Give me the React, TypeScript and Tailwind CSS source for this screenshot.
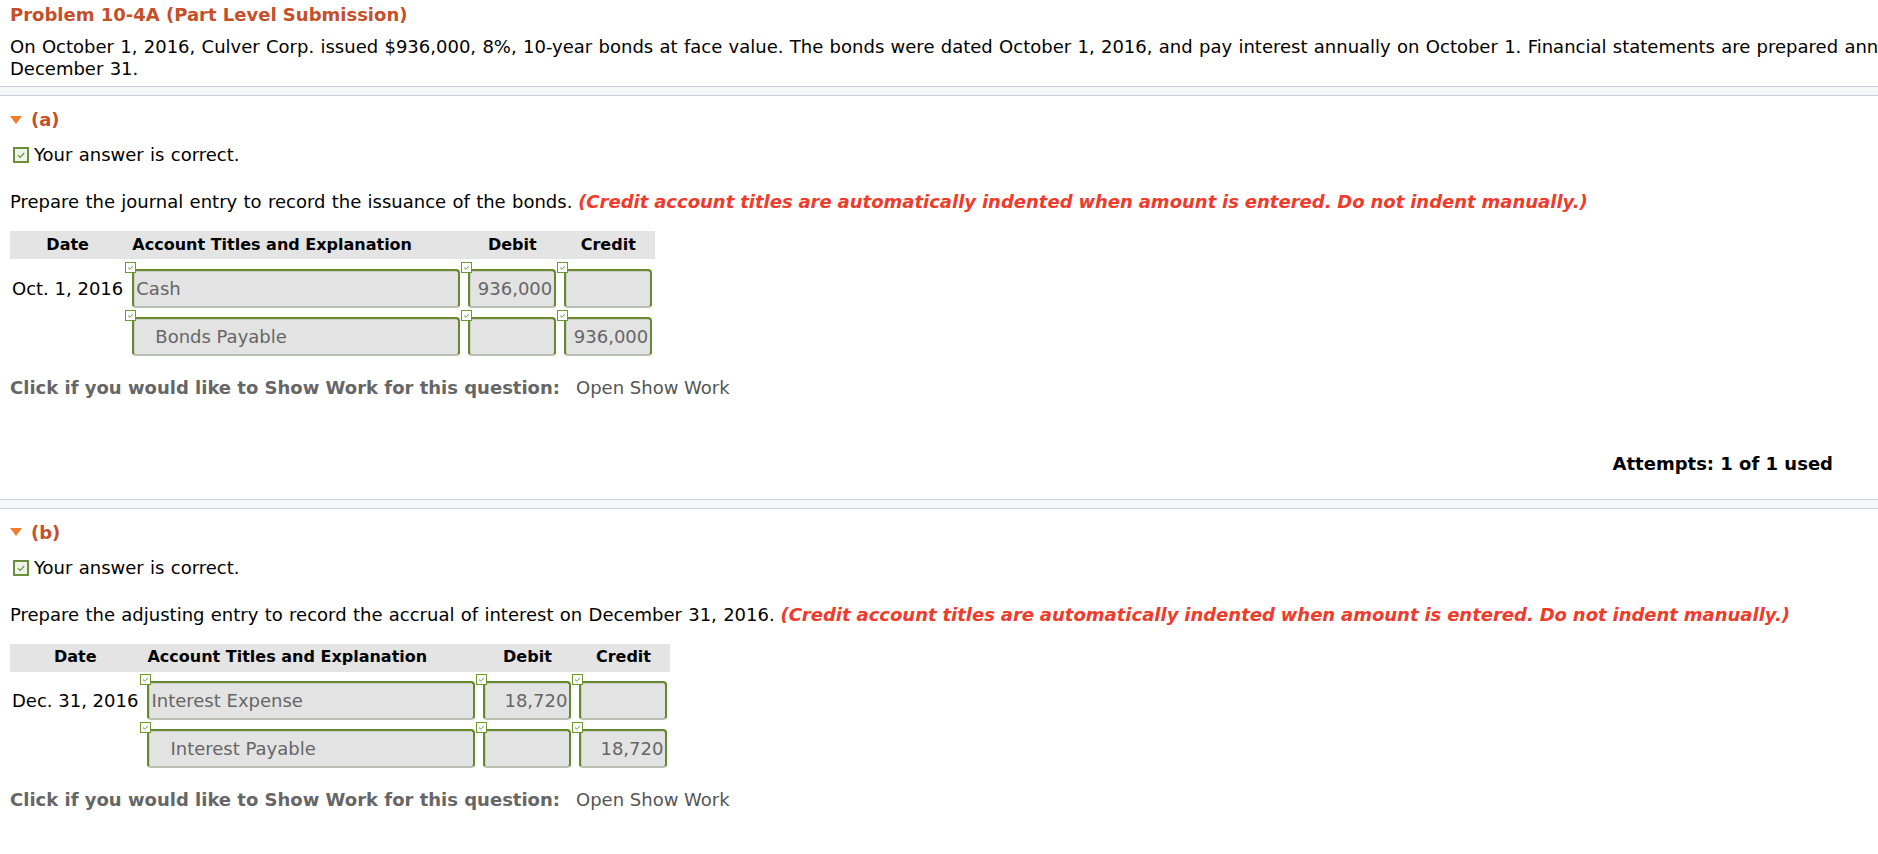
import React from 'react';

/* ─── small glyphs ─── */
function MiniCheck() {
  return (
    <svg
      className="absolute left-[-7px] top-[-7px] z-10"
      width="11"
      height="11"
      viewBox="0 0 11 11"
      aria-hidden="true"
    >
      <rect x="0.5" y="0.5" width="10" height="10" fill="#fff" stroke="#6b9a2f" />
      <path d="M3 5.6 L4.7 7.2 L8 3.8" fill="none" stroke="#6b9a2f" strokeWidth="1" />
    </svg>
  );
}

function CorrectBox() {
  return (
    <svg width="16" height="16" viewBox="0 0 16 16" aria-hidden="true">
      <rect x="1" y="1" width="14" height="14" fill="#eef4ea" stroke="#6b8e3a" strokeWidth="2" />
      <path d="M5 8.2 L7.2 10.4 L11.2 6" fill="none" stroke="#6b9a3f" strokeWidth="1.3" />
    </svg>
  );
}

function Caret() {
  return (
    <svg width="12" height="9" viewBox="0 0 12 9" aria-hidden="true">
      <path d="M0 0 H12 L6 8 Z" fill="#ef7d2f" />
    </svg>
  );
}

function Divider() {
  return <div className="h-[10px] border-y border-[#c9d0db] bg-[#f5f7fa]" />;
}

type Line = { account: string; debit: string; credit: string };

function Field({ value, w, align, indent }: { value: string; w: string; align?: 'right'; indent?: boolean }) {
  return (
    <div className="relative mt-[9px]">
      <MiniCheck />
      <div
        className={`${w} h-[39px] rounded-[4px] border-2 border-[#648a2c] border-b-[#b9bfb2] bg-[#e3e3e3] shadow-[inset_1px_1px_0_#cfcfcf] flex items-center text-[18px] text-[#666] ${
          align === 'right' ? 'justify-end pr-[2px]' : indent ? 'pl-[21px]' : 'pl-[2px]'
        }`}
      >
        {value}
      </div>
    </div>
  );
}

function Journal({ date, lines }: { date: string; lines: Line[] }) {
  return (
    <table className="border-collapse">
      <thead>
        <tr className="bg-[#e4e4e4] h-[28px] text-[16px] font-bold text-black">
          <th className="pl-[2px] pr-[9px] text-center">Date</th>
          <th className="text-left pr-[8px]">Account Titles and Explanation</th>
          <th className="pr-[8px] text-center">Debit</th>
          <th className="pr-[3px] text-center">Credit</th>
        </tr>
      </thead>
      <tbody>
        {lines.map((l, i) => (
          <tr key={i} className={i === 0 ? 'border-t border-transparent' : ''}>
            <td className="pl-[2px] pr-[9px] align-top">
              <div className="pt-[9px] h-[48px] flex items-center whitespace-nowrap text-[18px] text-black">
                {i === 0 ? date : ''}
              </div>
            </td>
            <td className="pr-[8px] align-top">
              <Field value={l.account} w="w-[328px]" indent={l.credit !== ''} />
            </td>
            <td className="pr-[8px] align-top">
              <Field value={l.debit} w="w-[88px]" align="right" />
            </td>
            <td className="pr-[3px] align-top">
              <Field value={l.credit} w="w-[88px]" align="right" />
            </td>
          </tr>
        ))}
      </tbody>
    </table>
  );
}

function ShowWork() {
  return (
    <div className="flex gap-[16px] leading-[22px] text-[18px]">
      <span className="font-bold text-[#666]">Click if you would like to Show Work for this question:</span>
      <span className="text-[#555]">Open Show Work</span>
    </div>
  );
}

function Part({ label, prompt, date, lines }: { label: string; prompt: string; date: string; lines: Line[] }) {
  return (
    <div className="px-[10px]">
      <div className="mt-[13px] flex items-center gap-[9px] leading-[22px]">
        <Caret />
        <span className="text-[18px] font-bold text-[#c4502a]">{label}</span>
      </div>
      <div className="mt-[13px] flex items-center leading-[22px] text-[18px]">
        <span className="ml-[3px] mr-[5px] flex">
          <CorrectBox />
        </span>
        <span className="[word-spacing:0.6px]">Your answer is correct.</span>
      </div>
      <p className="mt-[25px] leading-[22px] text-[18px] whitespace-nowrap">
        <span className="[word-spacing:0.6px]">{prompt}</span>{' '}
        <span className="font-bold italic text-[#ef3b2c] [word-spacing:-0.4px]">
          (Credit account titles are automatically indented when amount is entered. Do not indent manually.)
        </span>
      </p>
      <div className="mt-[18px]">
        <Journal date={date} lines={lines} />
      </div>
      <div className="mt-[21px]">
        <ShowWork />
      </div>
    </div>
  );
}

export default function App() {
  return (
    <div className="w-[1878px] h-[854px] overflow-hidden bg-white text-black font-['DejaVu_Sans',Verdana,sans-serif]">
      <div className="px-[10px] pt-[4px]">
        <h1 className="text-[18px] font-bold leading-[22px] text-[#c4502a]">Problem 10-4A (Part Level Submission)</h1>
        <p className="mt-[10px] text-[18px] leading-[22px] whitespace-nowrap [word-spacing:0.6px]">
          On October 1, 2016, Culver Corp. issued $936,000, 8%, 10-year bonds at face value. The bonds were dated October 1, 2016, and pay interest annually on October 1. Financial statements are prepared annually on
          <br />
          December 31.
        </p>
      </div>
      <div className="mt-[6px]">
        <Divider />
      </div>

      <Part
        label="(a)"
        prompt="Prepare the journal entry to record the issuance of the bonds."
        date="Oct. 1, 2016"
        lines={[
          { account: 'Cash', debit: '936,000', credit: '' },
          { account: 'Bonds Payable', debit: '', credit: '936,000' },
        ]}
      />

      <div className="mt-[54px] pr-[45px] flex justify-end text-[18px] font-bold leading-[22px]">
        Attempts: 1 of 1 used
      </div>
      <div className="mt-[24px]">
        <Divider />
      </div>

      <Part
        label="(b)"
        prompt="Prepare the adjusting entry to record the accrual of interest on December 31, 2016."
        date="Dec. 31, 2016"
        lines={[
          { account: 'Interest Expense', debit: '18,720', credit: '' },
          { account: 'Interest Payable', debit: '', credit: '18,720' },
        ]}
      />
    </div>
  );
}
